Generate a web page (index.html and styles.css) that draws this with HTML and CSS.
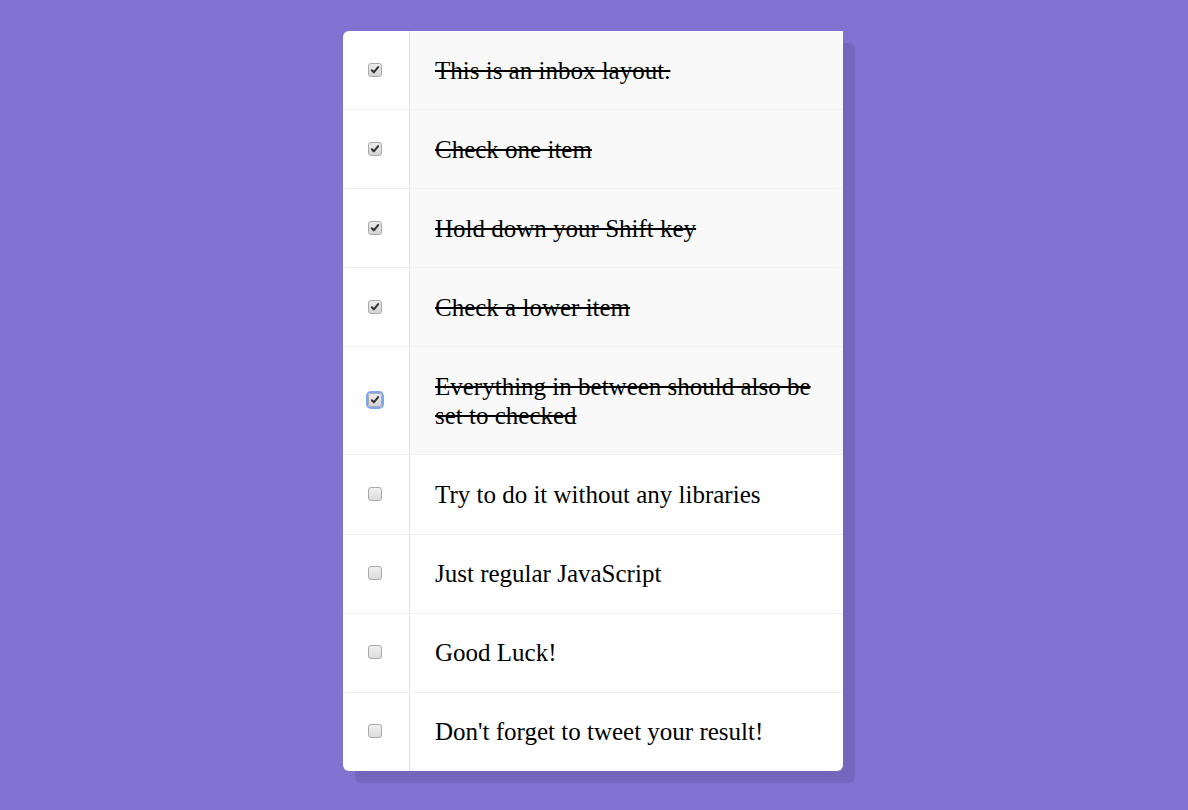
FILE: index.html
```html
<!DOCTYPE html>
<html>
<head>
<meta charset="utf-8">
<link rel="stylesheet" href="styles.css">
</head>
<body>
<div class="inbox">
  <div class="item"><input type="checkbox" checked><p>This is an inbox layout.</p></div>
  <div class="item"><input type="checkbox" checked><p>Check one item</p></div>
  <div class="item"><input type="checkbox" checked><p>Hold down your Shift key</p></div>
  <div class="item"><input type="checkbox" checked><p>Check a lower item</p></div>
  <div class="item"><input type="checkbox" class="focused" checked><p>Everything in between should also be set to checked</p></div>
  <div class="item"><input type="checkbox"><p>Try to do it without any libraries</p></div>
  <div class="item"><input type="checkbox"><p>Just regular JavaScript</p></div>
  <div class="item"><input type="checkbox"><p>Good Luck!</p></div>
  <div class="item"><input type="checkbox"><p>Don't forget to tweet your result!</p></div>
</div>
</body>
</html>
```

FILE: styles.css
```css
html {
  background: #8172d2;
}
body {
  margin: 0;
  padding: 31px 2px 31px 0;
  font-family: "Liberation Serif", "Times New Roman", serif;
}
.inbox {
  width: 500px;
  margin: 0 auto;
  background: #fff;
  border-radius: 6px;
  box-shadow: 12px 12px 0 rgba(0, 0, 0, 0.1);
}
.item {
  display: flex;
  align-items: center;
  border-bottom: 1px solid #f1f1f1;
}
.item:last-child {
  border-bottom: 0;
}
input[type="checkbox"] {
  -webkit-appearance: none;
  appearance: none;
  box-sizing: border-box;
  width: 14px;
  height: 14px;
  margin: -1px 27px 0 25px;
  flex: none;
  border: 1px solid #a9a9a9;
  border-radius: 3px;
  background: linear-gradient(#f0f0f0, #dcdcdc);
}
input[type="checkbox"]:checked {
  background: url("data:image/svg+xml;utf8,<svg xmlns='http://www.w3.org/2000/svg' viewBox='0 0 12 12'><path d='M2.2 6.4 L4.6 8.8 L9.8 2.6' fill='none' stroke='%23333' stroke-width='2.5' stroke-linecap='round' stroke-linejoin='round'/></svg>") center / 10px 10px no-repeat, linear-gradient(#ececec, #d4d4d4);
}
input.focused {
  outline: 2px solid #7aa7f0;
  outline-offset: 0;
}
p {
  margin: 0;
  padding: 24.56px 25px 24.56px 25px;
  flex: 1;
  font-size: 25px;
  line-height: 29px;
  color: #000;
  border-left: 1px solid #d1e2ff;
}
input:checked + p {
  background: #f9f9f9;
  text-decoration: line-through;
}
```
